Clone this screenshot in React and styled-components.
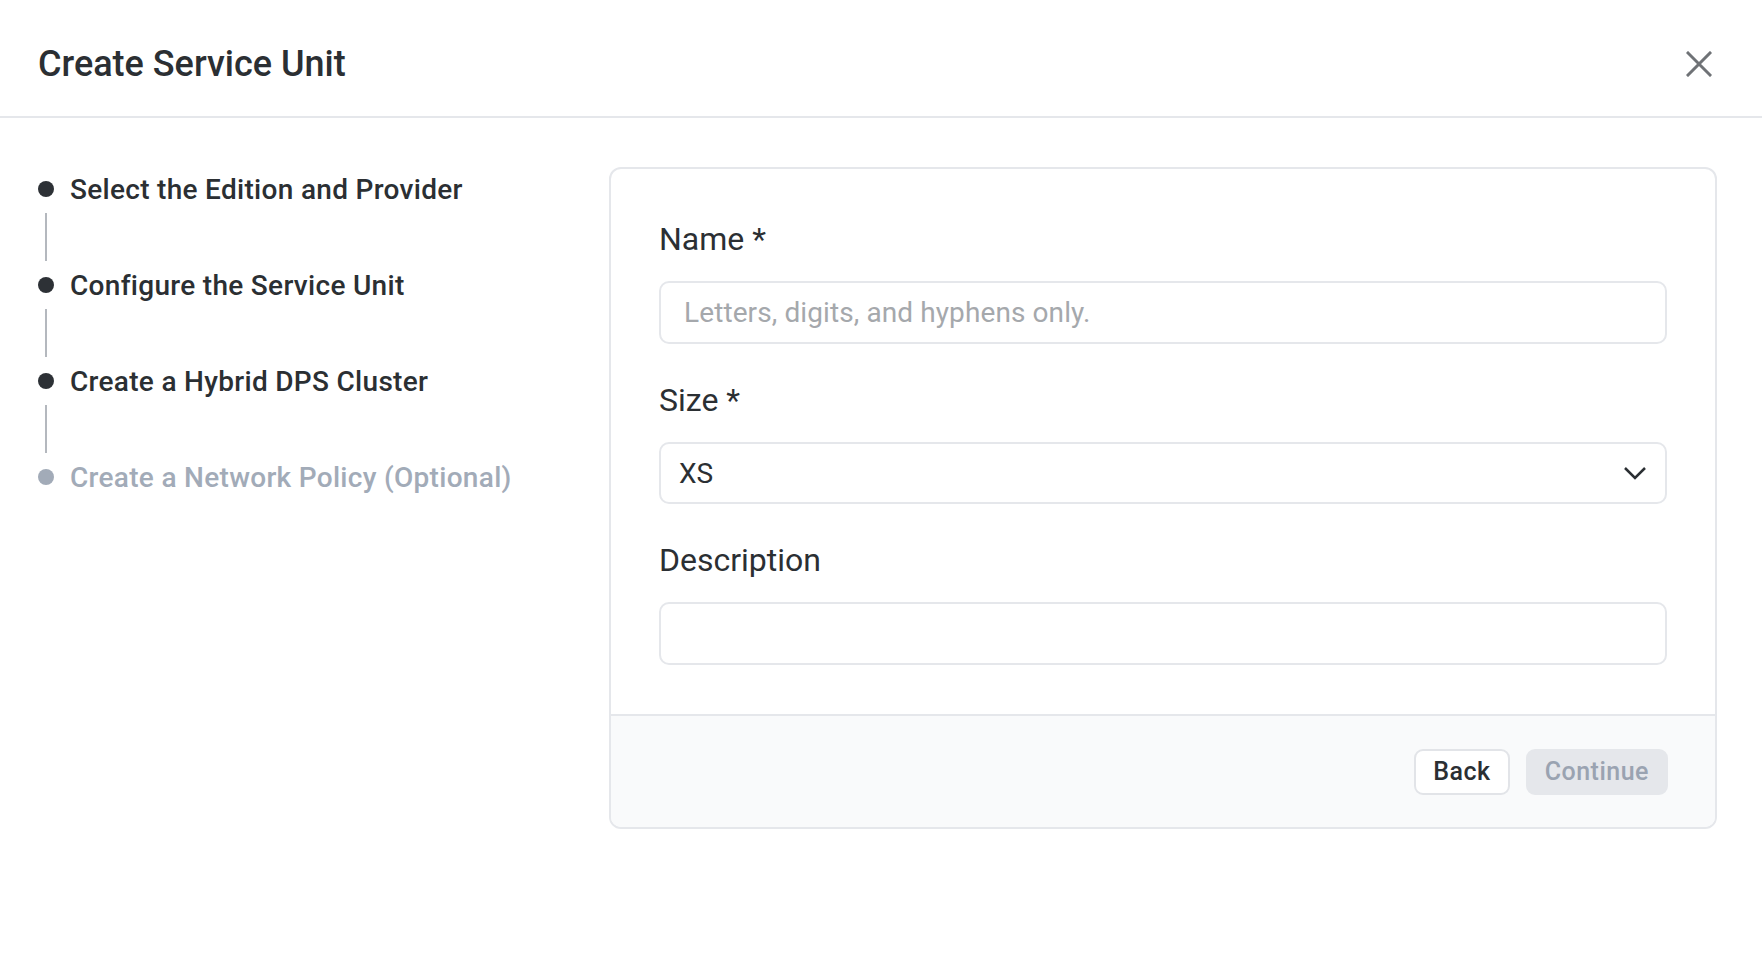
import React from "react"
import styled, { createGlobalStyle } from "styled-components"

const GlobalStyle = createGlobalStyle`
  body {
    margin: 0;
    background: #fff;
    font-family: Roboto, "Liberation Sans", sans-serif;
    color: #2b2f33;
  }
`

const Page = styled.div`
  width: 1762px;
  min-height: 980px;
  background: #fff;
`

const Header = styled.header`
  display: flex;
  align-items: center;
  justify-content: space-between;
  height: 104px;
  padding: 12px 38px 0;
  border-bottom: 2px solid #e5e7eb;
`

const Title = styled.h1`
  margin: 0;
  font-size: 36px;
  font-weight: 500;
  color: #2b2f33;
`

const CloseButton = styled.button`
  display: flex;
  align-items: center;
  justify-content: center;
  width: 52px;
  height: 52px;
  margin-right: -1px;
  padding: 0;
  border: none;
  background: none;
  color: #6f7276;
  cursor: pointer;
`

const Body = styled.div`
  display: flex;
  padding: 49px 45px 0 38px;
`

const Stepper = styled.ol`
  flex: 0 0 571px;
  margin: 0;
  padding: 2px 0 0;
  list-style: none;
`

const Step = styled.li`
  display: flex;
  align-items: center;
  gap: 16px;
  height: 40px;
  font-size: 28px;
  font-weight: 500;
  letter-spacing: 0.3px;
  color: ${p => (p.done ? "#2b2f33" : "#a2abb8")};
  white-space: nowrap;
`

const Dot = styled.span`
  flex: 0 0 16px;
  width: 16px;
  height: 16px;
  border-radius: 50%;
  background: ${p => (p.done ? "#2d3136" : "#a2abb8")};
`

const Connector = styled.div`
  width: 2px;
  height: 48px;
  margin: 4px 0 4px 7px;
  background: #b4b8be;
`

const Card = styled.section`
  flex: 1;
  border: 2px solid #e5e7eb;
  border-radius: 12px;
  overflow: hidden;
`

const Form = styled.div`
  display: flex;
  flex-direction: column;
  padding: 50px 48px 49px;
`

const Field = styled.div`
  display: flex;
  flex-direction: column;
  gap: 22px;
  & + & {
    margin-top: 36px;
  }
`

const Label = styled.label`
  font-size: 32px;
  line-height: 40px;
  font-weight: 400;
  color: #2b2f33;
`

const Input = styled.input`
  box-sizing: border-box;
  height: 63px;
  padding: 0 23px;
  border: 2px solid #e5e7eb;
  border-radius: 10px;
  font-family: Roboto, "Liberation Sans", sans-serif;
  font-size: 28px;
  letter-spacing: 0.1px;
  color: #2b2f33;
  outline: none;
  &::placeholder {
    color: #a5a8ac;
  }
`

const Select = styled.div`
  box-sizing: border-box;
  display: flex;
  align-items: center;
  justify-content: space-between;
  height: 62px;
  padding: 0 18px 0 18px;
  border: 2px solid #e5e7eb;
  border-radius: 10px;
  font-size: 28px;
  color: #2b2f33;
`

const Footer = styled.div`
  display: flex;
  justify-content: flex-end;
  align-items: center;
  gap: 16px;
  height: 111px;
  padding: 0 47px;
  border-top: 2px solid #e5e7eb;
  background: #f9fafb;
`

const Button = styled.button`
  box-sizing: border-box;
  height: 46px;
  padding: 0 ${p => (p.primary ? "17px" : "17px")};
  border: 2px solid ${p => (p.primary ? "#e5e7eb" : "#e2e4e8")};
  border-radius: 9px;
  background: ${p => (p.primary ? "#e5e7eb" : "#fff")};
  color: ${p => (p.primary ? "#9aa3b1" : "#2b2f33")};
  font-family: Roboto, "Liberation Sans", sans-serif;
  font-size: 25px;
  font-weight: 500;
  letter-spacing: 0.5px;
`

const steps = [
  { label: "Select the Edition and Provider", done: true },
  { label: "Configure the Service Unit", done: true },
  { label: "Create a Hybrid DPS Cluster", done: true },
  { label: "Create a Network Policy (Optional)", done: false },
]

export default function App() {
  return (
    <Page>
      <GlobalStyle />
      <Header>
        <Title>Create Service Unit</Title>
        <CloseButton aria-label="Close">
          <svg width="26" height="26" viewBox="0 0 26 26" fill="none" stroke="currentColor" strokeWidth="3" strokeLinecap="square">
            <path d="M2 2 L24 24 M24 2 L2 24" />
          </svg>
        </CloseButton>
      </Header>
      <Body>
        <Stepper>
          {steps.map((s, i) => (
            <React.Fragment key={s.label}>
              <Step done={s.done}>
                <Dot done={s.done} />
                {s.label}
              </Step>
              {i < steps.length - 1 && <Connector />}
            </React.Fragment>
          ))}
        </Stepper>
        <Card>
          <Form>
            <Field>
              <Label>Name *</Label>
              <Input placeholder="Letters, digits, and hyphens only." />
            </Field>
            <Field>
              <Label>Size *</Label>
              <Select>
                XS
                <svg width="24" height="14" viewBox="0 0 24 14" fill="none" stroke="#2b2f33" strokeWidth="2.5">
                  <path d="M2 2 L12 12 L22 2" />
                </svg>
              </Select>
            </Field>
            <Field>
              <Label>Description</Label>
              <Input />
            </Field>
          </Form>
          <Footer>
            <Button>Back</Button>
            <Button primary>Continue</Button>
          </Footer>
        </Card>
      </Body>
    </Page>
  )
}
